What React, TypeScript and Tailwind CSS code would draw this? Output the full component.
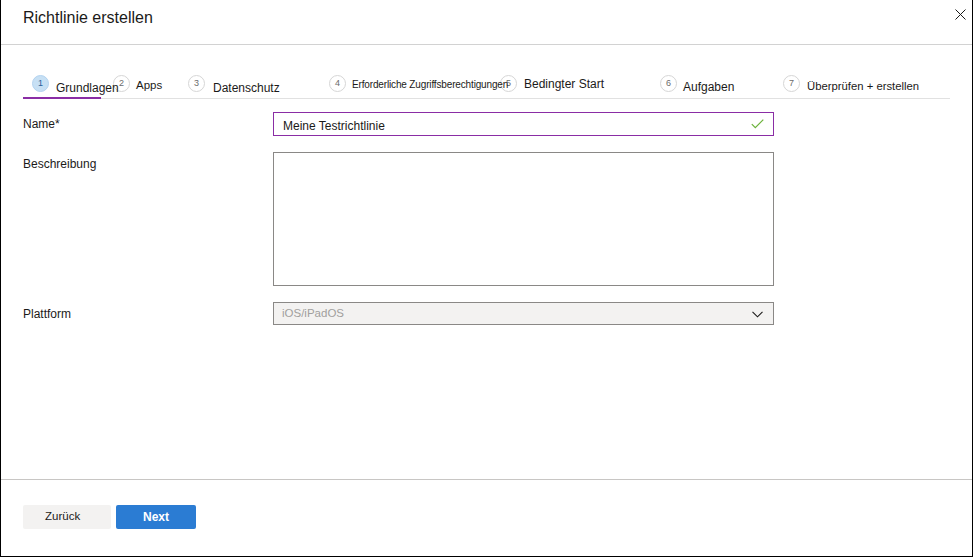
import React from "react";

type Step = {
  n: number;
  label: string;
  width: string;
  gap: string;
  labelClass: string;
  active?: boolean;
};

const steps: Step[] = [
  { n: 1, label: "Grundlagen", width: "w-[90px] pl-[9px]", gap: "gap-[7px]", labelClass: "text-[12px] mt-[7px]", active: true },
  { n: 2, label: "Apps", width: "w-[75px]", gap: "gap-[6px]", labelClass: "text-[11.5px] mt-[5px]" },
  { n: 3, label: "Datenschutz", width: "w-[141px]", gap: "gap-[8px]", labelClass: "text-[12px] mt-[7px]" },
  { n: 4, label: "Erforderliche Zugriffsberechtigungen", width: "w-[171px]", gap: "gap-[6px]", labelClass: "text-[10px] mt-[5px] tracking-[-0.15px]" },
  { n: 5, label: "Bedingter Start", width: "w-[160px]", gap: "gap-[7px]", labelClass: "text-[12px] mt-[3px]" },
  { n: 6, label: "Aufgaben", width: "w-[123px]", gap: "gap-[6px]", labelClass: "text-[12px] mt-[6px]" },
  { n: 7, label: "Überprüfen + erstellen", width: "w-[167px]", gap: "gap-[7px]", labelClass: "text-[11.3px] mt-[6px]" },
];

const StepTab: React.FC<{ step: Step }> = ({ step }) => (
  <div className={`flex flex-col shrink-0 ${step.width}`}>
    <div className={`flex items-start pt-[30px] ${step.gap}`}>
      <div
        className={
          step.active
            ? "flex h-[17px] w-[17px] shrink-0 items-center justify-center rounded-full border border-[#b3d3f0] bg-[#c7e0f4] text-[9px] leading-none text-[#2d5f9a]"
            : "flex h-[17px] w-[17px] shrink-0 items-center justify-center rounded-full border border-[#d6d6d6] text-[9px] leading-none text-[#6b6b6b]"
        }
      >
        {step.n}
      </div>
      <span className={`relative z-10 whitespace-nowrap leading-none text-[#1b1a19] ${step.labelClass}`}>
        {step.label}
      </span>
    </div>
    {step.active && <div className="mt-auto -ml-[9px] -mb-px h-[2px] w-[78px] bg-[#8a2da5]" />}
  </div>
);

const App: React.FC = () => {
  return (
    <div
      className="flex h-[557px] w-[973px] flex-col border-r border-b border-l border-black bg-white text-[#1b1a19]"
      style={{ fontFamily: '"Liberation Sans", Arial, sans-serif' }}
    >
      {/* header */}
      <div className="flex h-[45px] shrink-0 items-start justify-between border-b border-[#d2d2d2] pl-[22px] pr-[6px]">
        <h1 className="pt-[10px] text-[16px] leading-none text-[#1b1a19]">Richtlinie erstellen</h1>
        <button className="mt-[9px] flex h-[11px] w-[11px] items-center justify-center">
          <svg width="11" height="11" viewBox="0 0 11 11" fill="none">
            <path d="M0.5 0.5L10.5 10.5M10.5 0.5L0.5 10.5" stroke="#1b1a19" strokeWidth="1" />
          </svg>
        </button>
      </div>

      {/* body */}
      <div className="flex flex-1 flex-col">
        {/* steps */}
        <div className="ml-[22px] flex h-[54px] w-[927px] items-stretch border-b border-[#e1e1e1]">
          {steps.map((s) => (
            <StepTab key={s.n} step={s} />
          ))}
        </div>

        {/* form */}
        <div className="mt-[13px] flex flex-col gap-[16px] pl-[22px]">
          <div className="flex items-start">
            <label className="w-[250px] pt-[6px] text-[12px] leading-none">Name*</label>
            <div className="flex h-[24px] w-[501px] items-start justify-between border border-[#8a2da5] pl-[9px] pr-[9px]">
              <span className="pt-[7px] text-[12px] leading-none">Meine Testrichtlinie</span>
              <svg width="13" height="10" viewBox="0 0 13 10" fill="none" className="mt-[6px]">
                <path d="M0.8 5.2L4.3 8.7L12.3 0.7" stroke="#6bb23a" strokeWidth="1.2" />
              </svg>
            </div>
          </div>

          <div className="flex items-start">
            <label className="w-[250px] pt-[6px] text-[12px] leading-none">Beschreibung</label>
            <div className="h-[134px] w-[501px] border border-[#8a8886] bg-white" />
          </div>

          <div className="flex items-start">
            <label className="w-[250px] pt-[6px] text-[12px] leading-none">Plattform</label>
            <div className="flex h-[23px] w-[501px] items-start justify-between border border-[#8a8886] bg-[#f3f2f1] pl-[8px] pr-[10px]">
              <span className="pt-[5px] text-[11.5px] leading-none text-[#a19f9d]">iOS/iPadOS</span>
              <svg width="11" height="7" viewBox="0 0 11 7" fill="none" className="mt-[8px]">
                <path d="M0.5 0.8L5.5 5.8L10.5 0.8" stroke="#1b1a19" strokeWidth="1.1" />
              </svg>
            </div>
          </div>
        </div>
      </div>

      {/* footer */}
      <div className="flex h-[77px] shrink-0 items-start gap-[5px] border-t border-[#c8c6c4] pl-[22px] pt-[25px]">
        <button className="h-[24px] w-[88px] rounded-[2px] bg-[#f3f2f1] pl-[22px] text-left text-[11.5px] leading-none text-[#1b1a19]">
          Zurück
        </button>
        <button className="h-[24px] w-[80px] rounded-[2px] bg-[#2b7cd3] text-[12px] font-bold leading-none text-white">
          Next
        </button>
      </div>
    </div>
  );
};

export default App;
